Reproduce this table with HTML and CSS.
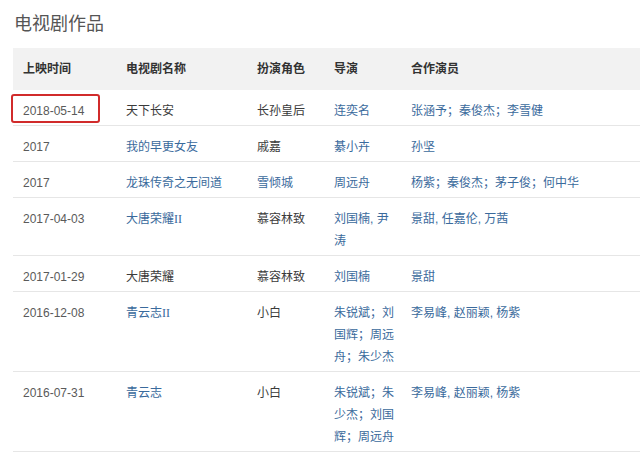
FILE: index.html
```html
<!DOCTYPE html>
<html lang="zh-CN">
<head>
<meta charset="utf-8">
<link rel="stylesheet" href="styles.css">
</head>
<body>
<div class="page">
  <h2 class="title">电视剧作品</h2>
  <table class="works">
    <colgroup>
      <col class="c-date"><col class="c-name"><col class="c-role"><col class="c-dir"><col class="c-cast">
    </colgroup>
    <thead>
      <tr><th>上映时间</th><th>电视剧名称</th><th>扮演角色</th><th>导演</th><th>合作演员</th></tr>
    </thead>
    <tbody>
      <tr>
        <td class="date marked">2018-05-14<span class="mark"></span></td>
        <td>天下长安</td><td>长孙皇后</td>
        <td class="link">连奕名</td><td class="link">张涵予；秦俊杰；李雪健</td>
      </tr>
      <tr>
        <td class="date">2017</td>
        <td class="link">我的早更女友</td><td>戚嘉</td>
        <td class="link">綦小卉</td><td class="link">孙坚</td>
      </tr>
      <tr>
        <td class="date">2017</td>
        <td class="link">龙珠传奇之无间道</td><td class="link">雪倾城</td>
        <td class="link">周远舟</td><td class="link">杨紫；秦俊杰；茅子俊；何中华</td>
      </tr>
      <tr>
        <td class="date">2017-04-03</td>
        <td class="link">大唐荣耀<span class="roman">II</span></td><td>慕容林致</td>
        <td class="link">刘国楠, 尹涛</td><td class="link">景甜, 任嘉伦, 万茜</td>
      </tr>
      <tr>
        <td class="date">2017-01-29</td>
        <td>大唐荣耀</td><td>慕容林致</td>
        <td class="link">刘国楠</td><td class="link">景甜</td>
      </tr>
      <tr>
        <td class="date">2016-12-08</td>
        <td class="link">青云志<span class="roman">II</span></td><td>小白</td>
        <td class="link">朱锐斌；刘国辉；周远舟；朱少杰</td><td class="link">李易峰, 赵丽颖, 杨紫</td>
      </tr>
      <tr>
        <td class="date">2016-07-31</td>
        <td class="link">青云志</td><td>小白</td>
        <td class="link">朱锐斌；朱少杰；刘国辉；周远舟</td><td class="link">李易峰, 赵丽颖, 杨紫</td>
      </tr>
    </tbody>
  </table>
</div>
</body>
</html>
```

FILE: styles.css
```css
html, body {
  margin: 0;
  padding: 0;
  background: #ffffff;
}
body {
  font-family: "Liberation Sans", "Noto Sans CJK SC", sans-serif;
  color: #333333;
  width: 640px;
  height: 456px;
  overflow: hidden;
}
.page {
  padding-left: 13px;
}
.title {
  margin: 12px 0 12px 1px;
  font-size: 18px;
  line-height: 24px;
  font-weight: normal;
  color: #555555;
}
.works {
  width: 627px;
  border-collapse: collapse;
  table-layout: fixed;
  font-size: 12px;
}
.c-date { width: 103px; }
.c-name { width: 131px; }
.c-role { width: 77px; }
.c-dir { width: 77px; }
.works th {
  background: #f2f2f2;
  text-align: left;
  font-weight: bold;
  color: #333333;
  line-height: 22px;
  padding: 10px 4px 10px 10px;
}
.works td {
  text-align: left;
  vertical-align: top;
  line-height: 22px;
  padding: 10px 4px 3px 10px;
  border-bottom: 1px solid #e6e6e6;
  color: #3a3a3a;
}
.works td.date {
  color: #5a5a5a;
}
.works td.link {
  color: #3a6a9c;
}
.roman {
  font-family: "Liberation Serif", serif;
  font-size: 12px;
}
.works td.marked {
  position: relative;
}
.mark {
  position: absolute;
  left: -2px;
  top: 4px;
  width: 85px;
  height: 25px;
  border: 2px solid #d12b2b;
  border-radius: 3px;
}
```
